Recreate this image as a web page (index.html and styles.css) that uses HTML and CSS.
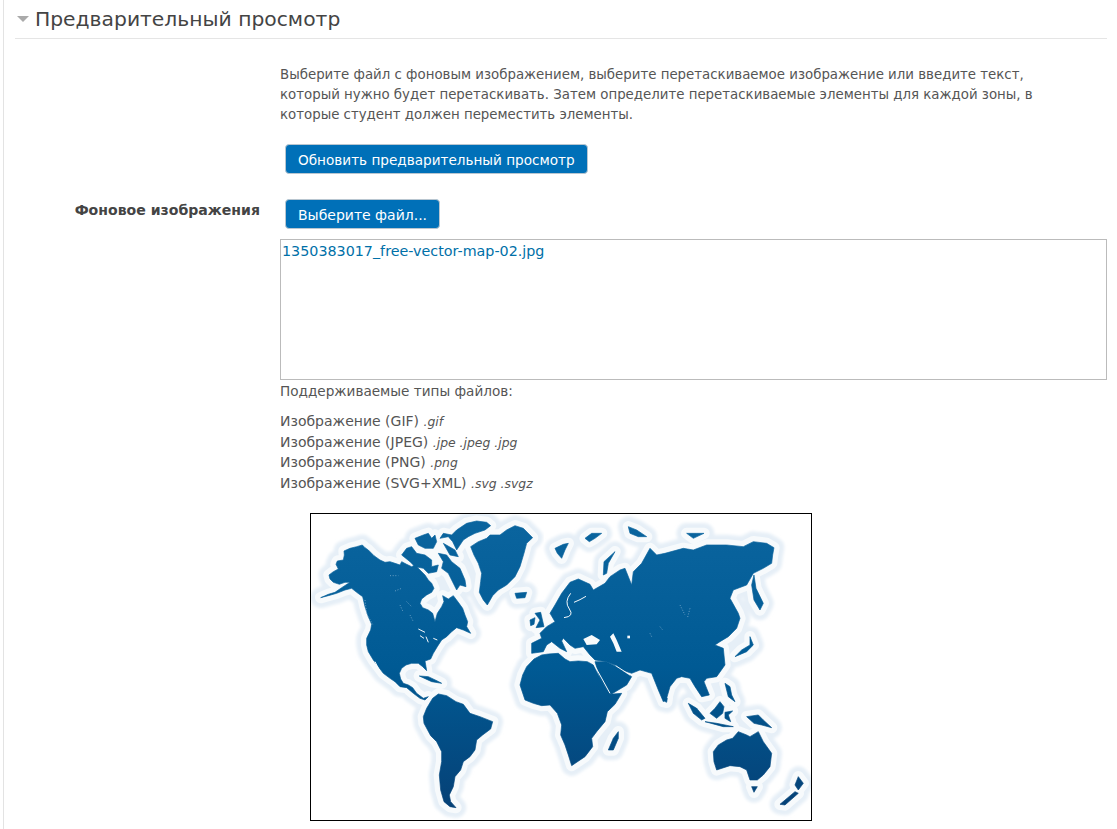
FILE: index.html
```html
<!DOCTYPE html>
<html lang="ru">
<head>
    <meta charset="UTF-8">
    <title>Предварительный просмотр</title>
    <link rel="stylesheet" href="styles.css">
</head>
<body>
    <div class="page">
        <div class="legend">
            <span class="arrow"></span>
            <h3>Предварительный просмотр</h3>
        </div>

        <div class="row intro">
            <div class="label"></div>
            <div class="field">
                <p class="hint">Выберите файл с фоновым изображением, выберите перетаскиваемое изображение или введите текст, который нужно будет перетаскивать. Затем определите перетаскиваемые элементы для каждой зоны, в которые студент должен переместить элементы.</p>
                <button class="btn btn-wide">Обновить предварительный просмотр</button>
            </div>
        </div>

        <div class="row">
            <div class="label"><strong>Фоновое изображения</strong></div>
            <div class="field">
                <button class="btn">Выберите файл...</button>
                <div class="filebox"><a href="#">1350383017_free-vector-map-02.jpg</a></div>
                <p class="types-title">Поддерживаемые типы файлов:</p>
                <ul class="types">
                    <li>Изображение (GIF) <em>.gif</em></li>
                    <li>Изображение (JPEG) <em>.jpe .jpeg .jpg</em></li>
                    <li>Изображение (PNG) <em>.png</em></li>
                    <li>Изображение (SVG+XML) <em>.svg .svgz</em></li>
                </ul>
                <div class="preview">
                    <svg width="500" height="306" viewBox="311 514 500 306">
                        <defs>
                            <linearGradient id="sea" gradientUnits="userSpaceOnUse" x1="0" y1="25" x2="0" y2="945">
                                <stop offset="0" stop-color="#0b659f"/>
                                <stop offset="0.5" stop-color="#005a94"/>
                                <stop offset="1" stop-color="#063f74"/>
                            </linearGradient>
                            <filter id="soft" x="-5%" y="-5%" width="110%" height="110%">
                                <feGaussianBlur stdDeviation="4"/>
                            </filter>
                            <g id="west">
                                <!-- north america -->
                                <path d="M62 278L85 268 105 262 125 248 150 232 135 232 118 238 100 232 90 222 87 210 100 200 115 192 108 178 112 168 130 165 133 150 132 138 150 130 170 125 187 120 195 128 205 135 222 152 240 165 255 172 270 170 285 175 300 180 305 170 320 178 335 185 345 180 360 195 375 210 385 225 395 235 402 250 395 262 380 270 365 282 360 295 368 308 385 315 398 325 405 350 412 325 425 305 432 290 428 272 445 282 460 272 475 292 488 310 495 330 503 350 500 365 512 385 490 375 470 368 455 380 440 395 425 405 412 425 400 445 392 462 375 468 378 485 380 497 368 485 355 475 335 475 318 480 305 490 298 505 302 522 310 535 325 540 338 548 350 565 370 580 385 575 375 585 360 580 340 565 320 548 300 545 285 530 270 520 250 505 235 485 220 465 205 440 200 420 200 400 212 375 215 358 205 335 195 305 188 275 170 262 155 250 135 255 110 265 85 272z"/>
                                <!-- arctic islands -->
                                <path d="M305 150L320 130 335 125 350 145 375 150 395 165 395 185 415 180 410 200 385 205 370 190 345 185 330 170z"/>
                                <path d="M345 100L370 90 385 85 395 100 405 90 410 110 400 130 375 130 355 120z"/>
                                <path d="M470 75L500 55 530 48 560 52 572 62 555 75 525 85 505 95 490 105 470 135 458 110 445 95 420 100 430 85 455 90z"/>
                                <path d="M415 145L440 150 455 170 480 190 495 225 498 245 480 240 470 255 455 225 445 205 425 190 430 170z"/>
                                <path d="M430 115L465 135 475 155 450 150z"/>
                                <!-- greenland, iceland -->
                                <path d="M512 125L535 110 560 100 570 90 600 90 620 75 645 62 670 70 698 98 680 115 672 145 660 185 645 215 620 240 595 255 578 272 562 300 550 285 538 262 542 230 545 205 535 175 522 150z"/>
                                <path d="M645 265L680 262 675 278 650 280z"/>
                                <!-- south america -->
                                <path d="M370 635L380 610 398 580 415 567 440 572 468 590 490 598 510 625 540 635 578 650 572 672 548 690 530 705 525 735 510 755 490 770 482 795 465 815 460 845 448 870 452 890 468 908 450 905 432 890 422 855 418 810 425 770 425 740 410 710 392 692 372 655z"/>
                                <!-- cuba, hispaniola -->
                                <path d="M358 513L385 515 412 528 425 535 395 530z"/>
                                <!-- gulf of california, lakes, canadian specks -->
                                <path class="gap-line" d="M225 470L245 510"/>
                                <path class="gap-line" d="M355 372L375 382M378 395L385 412M400 400L412 405M360 392L372 400"/>
                                <path class="speck" d="M270 212L295 212M285 258L305 250M320 290L335 305M330 330L340 350M195 285L200 325M300 300L310 322M205 335L218 358"/>
                            </g>
                            <g id="east">
                                <!-- africa -->
                                <path d="M-90 540L-82 510-70 485-48 462-25 450-5 447 25 445 45 462 60 470 85 468 112 470 130 480 145 510 165 545 180 568 215 565 195 598 172 620 165 650 140 680 125 700 128 725 105 755 65 782 55 750 45 720 32 690 35 660 22 625 0 600-25 602-50 595-75 585z"/>
                                <!-- arabia -->
                                <path d="M135 470L170 470 200 485 245 515 230 540 180 570 150 520z"/>
                                <!-- eurasia -->
                                <path d="M-55 415L-25 400-30 385-10 365 15 350 0 325 15 300 35 265 60 232 85 222 120 238 130 255 165 235 180 215 210 195 225 190 245 240 250 200 275 175 300 130 320 150 345 145 400 130 430 135 470 120 530 120 580 125 610 110 650 115 672 128 668 150 665 175 640 190 610 205 590 240 550 255 540 280 565 325 570 340 560 370 535 395 510 410 495 420 520 430 525 480 500 515 470 520 462 530 478 570 455 575 435 545 420 520 395 515 380 520 360 545 350 580 340 590 325 555 305 505 270 495 245 505 215 495 195 480 170 470 135 465 120 450 100 425 75 430 60 420 40 400 35 408 50 440 30 430 5 410-10 420-20 440-55 445z"/>
                                <!-- kamchatka -->
                                <path d="M612 210L618 250 640 295 630 315 612 285 605 240z"/>
                                <!-- baltic, black sea, caspian, red sea, gulf -->
                                <path class="gap-line" d="M62 265Q42 290 58 312T42 338M72 292Q90 285 108 274"/>
                                <path class="gap" d="M100 402L125 390 150 405 140 418 110 420z"/>
                                <path class="gap" d="M180 395L190 385 200 405 215 440 200 440 190 415z"/>
                                <path class="gap" d="M232 392L240 392 240 400 232 400z"/>
                                <path class="gap-line" d="M132 478L180 565"/>
                                <path class="gap-line" d="M197 482L240 510"/>
                                <path class="speck" d="M390 300L405 330M420 310L412 340M300 385L305 395M330 365L338 375"/>
                                <!-- britain -->
                                <path d="M-45 325L-28 322-18 365-42 368-30 345z"/>
                                <path d="M-60 345L-45 338-48 358-58 362z"/>
                                <!-- north islands -->
                                <path d="M15 130L40 118 55 115 45 135 35 160 22 145z"/>
                                <path d="M105 100L125 85 155 85 135 100 118 110z"/>
                                <path d="M160 210L162 170 195 140 175 175 170 205z"/>
                                <path d="M235 65L260 75 290 95 265 95 240 85z"/>
                                <path d="M410 85L440 85 462 85 430 100z"/>
                                <!-- asia islands -->
                                <path d="M555 455L575 435 600 420 600 395 610 420 590 440z"/>
                                <path d="M345 575L352 580 350 592 342 588z"/>
                                <path d="M415 595L440 610 465 640 455 645 430 625z"/>
                                <path d="M465 650L500 655 550 665 520 665z"/>
                                <path d="M480 625L495 610 510 590 522 605 518 625 500 640z"/>
                                <path d="M525 535L540 545 545 570 555 590 535 575z"/>
                                <path d="M525 622L548 618 535 630 542 650 525 640z"/>
                                <path d="M590 635L625 630 640 645 665 668 635 660 612 655z"/>
                                <!-- australia, tasmania, new zealand, madagascar -->
                                <path d="M490 740L505 720 530 705 548 700 565 680 590 690 600 695 625 680 640 710 665 745 660 785 640 810 622 825 600 825 590 795 570 785 540 782 500 795 492 770z"/>
                                <path d="M605 845L622 845 612 862z"/>
                                <path d="M735 840L745 815 760 835 745 855z"/>
                                <path d="M690 898L735 860 745 865 705 900z"/>
                                <path d="M175 735L190 700 205 680 205 700 190 735z"/>
                            </g>
                        </defs>
                        <g transform="translate(300 505) scale(.3333)">
                            <use href="#west" class="halo halo-outer"/>
                            <use href="#west" class="halo halo-inner"/>
                            <use href="#west" class="land"/>
                        </g>
                        <g transform="translate(550 505) scale(.3333)">
                            <use href="#east" class="halo halo-outer"/>
                            <use href="#east" class="halo halo-inner"/>
                            <use href="#east" class="land"/>
                        </g>
                    </svg>
                </div>
            </div>
        </div>
    </div>
</body>
</html>
```

FILE: styles.css
```css
body {
    font-family: "DejaVu Sans", Verdana, sans-serif;
    font-size: 14px;
    line-height: 20px;
    color: #555;
    background-color: #fff;
    margin: 0;
    padding: 0;
}

.page {
    margin-left: 3px;
    border-left: 1px solid #e3e3e3;
    padding: 0 10px 0 11px;
    height: 829px;
    overflow: hidden;
}

.legend {
    display: flex;
    align-items: center;
    height: 38px;
    border-bottom: 1px solid #e5e5e5;
    padding-left: 2px;
}

.legend h3 {
    margin: 0;
    font-size: 20.3px;
    font-weight: normal;
    color: #444;
}

.arrow {
    width: 0;
    height: 0;
    margin-right: 6px;
    border-left: 6px solid transparent;
    border-right: 6px solid transparent;
    border-top: 6px solid #aaa;
}

.row {
    display: grid;
    grid-template-columns: 245px 1fr;
    column-gap: 20px;
}

.intro {
    padding-top: 26px;
    margin-bottom: 25px;
}

.label {
    text-align: right;
    padding-top: 1px;
    color: #444;
}

.label strong {
    font-size: 14.08px;
}

.hint {
    margin: 0 50px 19px 0;
    font-size: 13.35px;
}

.btn {
    display: block;
    margin-left: 5px;
    height: 30px;
    padding: 1px 12px 0;
    font-family: inherit;
    font-size: 14px;
    color: #fff;
    background-color: #0070b8;
    border: 1px solid #b9c6d0;
    border-radius: 4px;
}

.btn-wide {
    font-size: 13.6px;
}

.filebox {
    height: 138px;
    margin-top: 10px;
    border: 1px solid #bbb;
    padding: 1px 1px 0;
    font-size: 14.3px;
}

.filebox a {
    color: #0070a8;
    text-decoration: none;
}

.types-title {
    margin: 1px 0 10px 0;
    font-size: 13.6px;
}

.types {
    list-style: none;
    margin: 0 0 19px 0;
    padding: 0;
}

.types li {
    height: 20.7px;
}

.types em {
    font-size: 12.4px;
}

.preview {
    width: 500px;
    height: 306px;
    margin-left: 30px;
    border: 1px solid #000;
}

.preview svg {
    display: block;
}

.halo {
    stroke-linejoin: round;
    stroke-linecap: round;
}

.halo-outer {
    fill: #e6eff7;
    stroke: #e6eff7;
    stroke-width: 62;
    filter: url(#soft);
}

.halo-inner {
    fill: #f7fafc;
    stroke: #f7fafc;
    stroke-width: 34;
}

.land {
    fill: url(#sea);
    stroke: url(#sea);
    stroke-width: 2;
    stroke-linejoin: round;
}

.gap {
    fill: #f7fafc;
    stroke: none;
}

.gap-line {
    fill: none;
    stroke: #f7fafc;
    stroke-width: 3;
}

.speck {
    fill: none;
    stroke: #9dc0da;
    stroke-width: 2;
    stroke-dasharray: 3 5;
}
```
